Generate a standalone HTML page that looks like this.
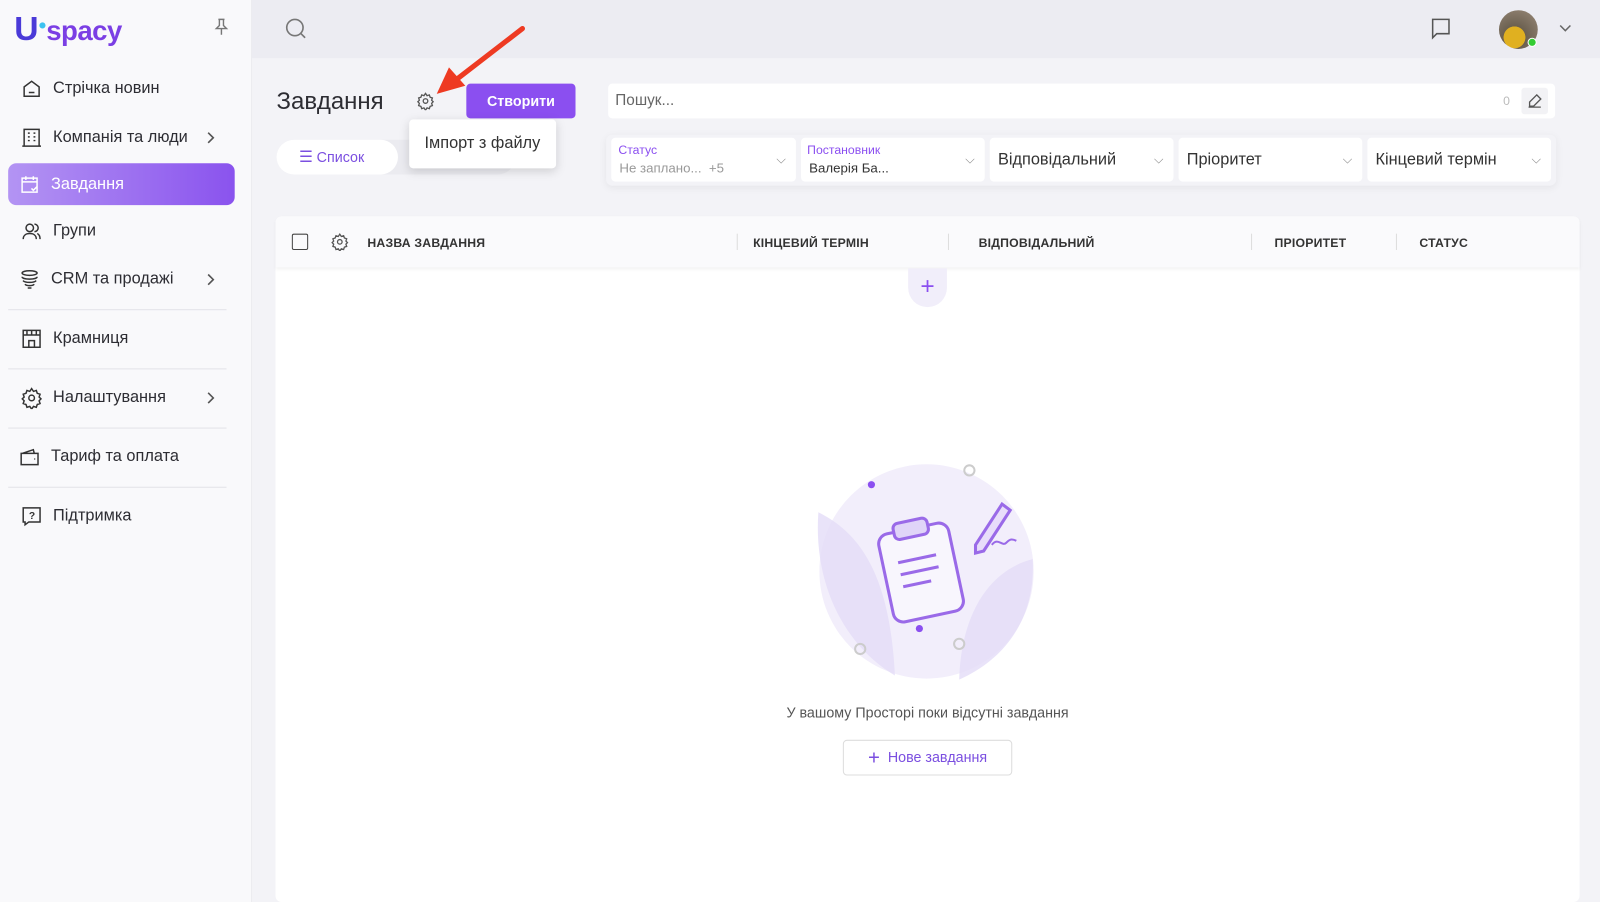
<!DOCTYPE html>
<html><head><meta charset="utf-8"><style>
*{box-sizing:border-box;margin:0;padding:0}
html,body{width:1600px;height:902px;overflow:hidden;background:#f3f3f7}
#r{position:absolute;left:0;top:0;width:1568px;height:884px;transform:scale(1.02041);transform-origin:0 0;font-family:"Liberation Sans",sans-serif;color:#2d2d33;background:#f3f3f7}
.a{position:absolute}
.side{left:0;top:0;width:247px;height:884px;background:#f9f9fb;border-right:1px solid #ececf0}
.nav{position:absolute;left:20px;font-size:16px;color:#2d2d33;display:flex;align-items:center;gap:10px}
.nav svg{width:22px;height:22px;fill:none;stroke:#333;stroke-width:1.6}
.chev{position:absolute;left:200px;width:14px;height:14px}
.hr{position:absolute;left:8px;width:214px;height:1px;background:#e3e3e8}
.th{position:absolute;top:231px;font-size:12px;font-weight:bold;color:#333;letter-spacing:.2px}
.sep{position:absolute;top:229px;width:1px;height:16px;background:#ddd}
.flt{position:absolute;top:135px;height:43px;background:#fff;border-radius:4px}
.flt .t{position:absolute;left:8px;font-size:16px;color:#333;top:13px}
.flt .v{position:absolute;right:10px;top:14px;font-size:12px;color:#888}
</style></head><body><div id="r">
<div class="a" style="left:247px;top:0;width:1321px;height:57px;background:#ececf2"></div>
<div class="a side">
 <div class="a" style="left:14px;top:9px;font-size:27px;font-weight:bold;color:#7b3fe4;letter-spacing:-0.5px"><span style="color:#4a3ad8;font-size:33px">U</span><span style="color:#3cc2f0;font-size:14px;vertical-align:10px">●</span>spacy</div>
 <svg class="a" style="left:209px;top:17px" width="16" height="18" viewBox="0 0 16 18" fill="none" stroke="#777" stroke-width="1.4"><path d="M5 2h6M6 2v6l-3 3h10l-3-3V2M8 11v6"/></svg>
 <div class="nav" style="top:76px"><svg viewBox="0 0 24 24"><path d="M4 10l8-6 8 6v10H4z M9 16h6"/></svg>Стрічка новин</div>
 <div class="nav" style="top:124px"><svg viewBox="0 0 24 24"><path d="M4 21V3h16v18M2 21h20M8 7h2M14 7h2M8 11h2M14 11h2M8 15h2M14 15h2"/></svg>Компанія та люди</div><svg class="chev" style="top:128px" fill="none" stroke="#555" stroke-width="1.6"><path d="M4 2l5 5-5 5"/></svg>
 <div class="a" style="left:8px;top:160px;width:222px;height:41px;border-radius:8px;background:linear-gradient(90deg,#b394f3,#8a53ee)"></div>
 <div class="nav" style="top:170px;left:18px;color:#fff"><svg viewBox="0 0 24 24" style="stroke:#fff"><path d="M4 5h16v15H4zM4 9h16M8 3v4M16 3v4M14 16l2 2 4-4"/></svg>Завдання</div>
 <div class="nav" style="top:216px"><svg viewBox="0 0 24 24"><circle cx="10" cy="8" r="4"/><path d="M3 20c0-4 3-6 7-6s7 2 7 6M15 4a4 4 0 010 8M18 14c2 1 3 3 3 6"/></svg>Групи</div>
 <div class="nav" style="top:263px;left:18px"><svg viewBox="0 0 24 24"><ellipse cx="12" cy="5" rx="8" ry="2.5"/><path d="M4 9c0 1.5 3.5 2.5 8 2.5s8-1 8-2.5M5 13c1 1.3 4 2 7 2s6-.7 7-2M7 17c1 1 3 1.5 5 1.5s4-.5 5-1.5M10 21h4"/></svg>CRM та продажі</div><svg class="chev" style="top:267px" fill="none" stroke="#555" stroke-width="1.6"><path d="M4 2l5 5-5 5"/></svg>
 <div class="hr" style="top:303px"></div>
 <div class="nav" style="top:321px"><svg viewBox="0 0 24 24"><path d="M3 3h18v18H3zM3 8h18M7 3v5M12 3v5M17 3v5M9 21v-7h6v7"/></svg>Крамниця</div>
 <div class="hr" style="top:361px"></div>
 <div class="nav" style="top:379px"><svg viewBox="0 0 24 24"><circle cx="12" cy="12" r="3"/><path d="M12 2l2 3 3-1 1 3 3 1-1 3 2 2-2 2 1 3-3 1-1 3-3-1-2 3-2-3-3 1-1-3-3-1 1-3-2-2 2-2-1-3 3-1 1-3 3 1z"/></svg>Налаштування</div><svg class="chev" style="top:383px" fill="none" stroke="#555" stroke-width="1.6"><path d="M4 2l5 5-5 5"/></svg>
 <div class="hr" style="top:419px"></div>
 <div class="nav" style="top:437px;left:18px"><svg viewBox="0 0 24 24"><path d="M3 8h18v12H3zM4 8l12-4 1 4M17 14h1"/></svg>Тариф та оплата</div>
 <div class="hr" style="top:477px"></div>
 <div class="nav" style="top:495px"><svg viewBox="0 0 24 24"><path d="M3 3h18v15H9l-4 3v-3H3z"/><text x="9" y="15" font-size="11" fill="#333" stroke="none" font-weight="bold">?</text></svg>Підтримка</div>
</div>
<svg class="a" style="left:279px;top:17px" width="22" height="22" fill="none" stroke="#777" stroke-width="1.6"><circle cx="10" cy="10" r="8"/><path d="M16 16l4 4"/></svg>
<svg class="a" style="left:1401px;top:17px" width="22" height="22" fill="none" stroke="#555" stroke-width="1.5"><path d="M3 2h16v14H7l-4 4z"/></svg>
<div class="a" style="left:1469px;top:10px;width:38px;height:38px;border-radius:50%;background:radial-gradient(circle at 40% 70%,#e0b020 0 30%,#6b6050 31%,#9a8a7a)"></div>
<div class="a" style="left:1497px;top:37px;width:9px;height:9px;border-radius:50%;background:#3c3;border:1.5px solid #fff"></div>
<svg class="a" style="left:1528px;top:24px" width="12" height="8" fill="none" stroke="#666" stroke-width="1.5"><path d="M1 1l5 5 5-5"/></svg>

<div class="a" style="left:271px;top:86px;font-size:23.5px;color:#2d2d33">Завдання</div>
<svg class="a" style="left:408px;top:90px" width="18" height="18" viewBox="0 0 24 24" fill="none" stroke="#555" stroke-width="1.7"><circle cx="12" cy="12" r="3"/><path d="M12 2l2 3 3-1 1 3 3 1-1 3 2 2-2 2 1 3-3 1-1 3-3-1-2 3-2-3-3 1-1-3-3-1 1-3-2-2 2-2-1-3 3-1 1-3 3 1z"/></svg>
<div class="a" style="left:457px;top:82px;width:107px;height:34px;background:#8b4ff0;border-radius:4px;color:#fff;font-size:14px;font-weight:bold;text-align:center;line-height:34px">Створити</div>
<div class="a" style="left:271px;top:137px;width:234px;height:34px;background:#ebebf0;border-radius:17px"></div>
<div class="a" style="left:271px;top:137px;width:119px;height:34px;background:#fff;border-radius:17px;color:#7b4fe0;font-size:14px;line-height:34px;padding-left:22px"><span style="font-size:15px">☰</span> Список</div>
<div class="a" style="left:401px;top:117px;width:144px;height:48px;background:#fff;border-radius:4px;box-shadow:0 3px 10px rgba(0,0,0,.15);font-size:16px;color:#333;line-height:48px;padding-left:15px">Імпорт з файлу</div>
<svg class="a" style="left:420px;top:20px" width="100" height="80"><path d="M92 8L22 62" stroke="#ee3a22" stroke-width="5" stroke-linecap="round"/><path d="M8 72L20 46L36 64z" fill="#ee3a22"/></svg>

<div class="a" style="left:596px;top:82px;width:928px;height:34px;background:#fff;border-radius:4px;font-size:15px;color:#666;line-height:34px;padding-left:7px">Пошук...</div>
<div class="a" style="left:1473px;top:92px;font-size:12px;color:#bbb">0</div>
<div class="a" style="left:1491px;top:86px;width:26px;height:26px;background:#f2f2f5;border-radius:3px"></div>
<svg class="a" style="left:1497px;top:92px" width="14" height="14" fill="none" stroke="#555" stroke-width="1.3"><path d="M9 1l4 4-7 7H2v-4zM1 13h12"/></svg>
<div class="a" style="left:594px;top:132px;width:931px;height:50px;border-radius:6px;box-shadow:0 2px 8px rgba(0,0,0,.06)"></div>
<div class="flt" style="left:599px;width:181px"><div class="a" style="left:7px;top:5px;font-size:12px;color:#8b4ff0">Статус</div><div class="a" style="left:8px;top:22px;font-size:13px;color:#999">Не заплано... &nbsp;+5</div><div class="v">⌵</div></div>
<div class="flt" style="left:785px;width:180px"><div class="a" style="left:6px;top:5px;font-size:12px;color:#8b4ff0">Постановник</div><div class="a" style="left:8px;top:22px;font-size:13px;color:#333">Валерія Ба...</div><div class="v">⌵</div></div>
<div class="flt" style="left:970px;width:180px"><div class="t">Відповідальний</div><div class="v">⌵</div></div>
<div class="flt" style="left:1155px;width:180px"><div class="t">Пріоритет</div><div class="v">⌵</div></div>
<div class="flt" style="left:1340px;width:180px"><div class="t">Кінцевий термін</div><div class="v">⌵</div></div>

<div class="a" style="left:270px;top:212px;width:1278px;height:672px;background:#fff;border-radius:6px"></div>
<div class="a" style="left:270px;top:212px;width:1278px;height:50px;background:#fafafc;border-radius:6px 6px 0 0;box-shadow:0 2px 3px rgba(0,0,0,.05)"></div>
<div class="a" style="left:286px;top:229px;width:16px;height:16px;border:1.5px solid #444;border-radius:2px"></div>
<svg class="a" style="left:324px;top:228px" width="18" height="18" viewBox="0 0 24 24" fill="none" stroke="#555" stroke-width="1.7"><circle cx="12" cy="12" r="3"/><path d="M12 2l2 3 3-1 1 3 3 1-1 3 2 2-2 2 1 3-3 1-1 3-3-1-2 3-2-3-3 1-1-3-3-1 1-3-2-2 2-2-1-3 3-1 1-3 3 1z"/></svg>
<div class="th" style="left:360px">НАЗВА ЗАВДАННЯ</div>
<div class="sep" style="left:722px"></div><div class="th" style="left:738px">КІНЦЕВИЙ ТЕРМІН</div>
<div class="sep" style="left:929px"></div><div class="th" style="left:959px">ВІДПОВІДАЛЬНИЙ</div>
<div class="sep" style="left:1226px"></div><div class="th" style="left:1249px">ПРІОРИТЕТ</div>
<div class="sep" style="left:1368px"></div><div class="th" style="left:1391px">СТАТУС</div>
<div class="a" style="left:890px;top:263px;width:38px;height:38px;border-radius:0 0 19px 19px;background:#f1eefa;color:#8b4ff0;font-size:24px;text-align:center;line-height:36px">+</div>

<svg class="a" style="left:790px;top:450px" width="240" height="220">
<circle cx="118" cy="110" r="105" fill="#f2eefb"/>
<path d="M12 52c40 20 70 60 75 160-50-30-80-90-75-160z" fill="#e4dcf8" opacity=".8"/>
<path d="M222 98c-40 10-70 50-72 118 45-20 75-60 72-118z" fill="#e4dcf8" opacity=".8"/>
<g transform="rotate(-12 145 95)"><rect x="75" y="60" width="70" height="88" rx="10" fill="#f8f6fd" stroke="#9a6ae8" stroke-width="3"/><rect x="92" y="52" width="34" height="16" rx="5" fill="#e0d4f8" stroke="#9a6ae8" stroke-width="3"/><path d="M90 90h38M90 102h38M90 114h28" stroke="#9a6ae8" stroke-width="3"/></g>
<path d="M192 44l8 6-26 40-8 2 0-8z" fill="#e8ddfa" stroke="#9a6ae8" stroke-width="3"/>
<path d="M182 84c6-8 10 2 14-2s6-4 10-2" fill="none" stroke="#9a6ae8" stroke-width="2"/>
<circle cx="64" cy="25" r="3.5" fill="#8b4ff0"/><circle cx="111" cy="166" r="3.5" fill="#8b4ff0"/>
<circle cx="160" cy="11" r="5" fill="none" stroke="#ccc" stroke-width="2"/><circle cx="53" cy="186" r="5" fill="none" stroke="#ccc" stroke-width="2"/><circle cx="150" cy="181" r="5" fill="none" stroke="#ccc" stroke-width="2"/>
</svg>
<div class="a" style="left:700px;top:690px;width:418px;text-align:center;font-size:14px;color:#555">У вашому Просторі поки відсутні завдання</div>
<div class="a" style="left:826px;top:725px;width:166px;height:35px;border:1.5px solid #ddd;border-radius:4px;color:#7b4fe0;font-size:14px;text-align:center;line-height:32px"><span style="font-size:20px;vertical-align:-2px">+</span>&nbsp; Нове завдання</div>
</div></body></html>
